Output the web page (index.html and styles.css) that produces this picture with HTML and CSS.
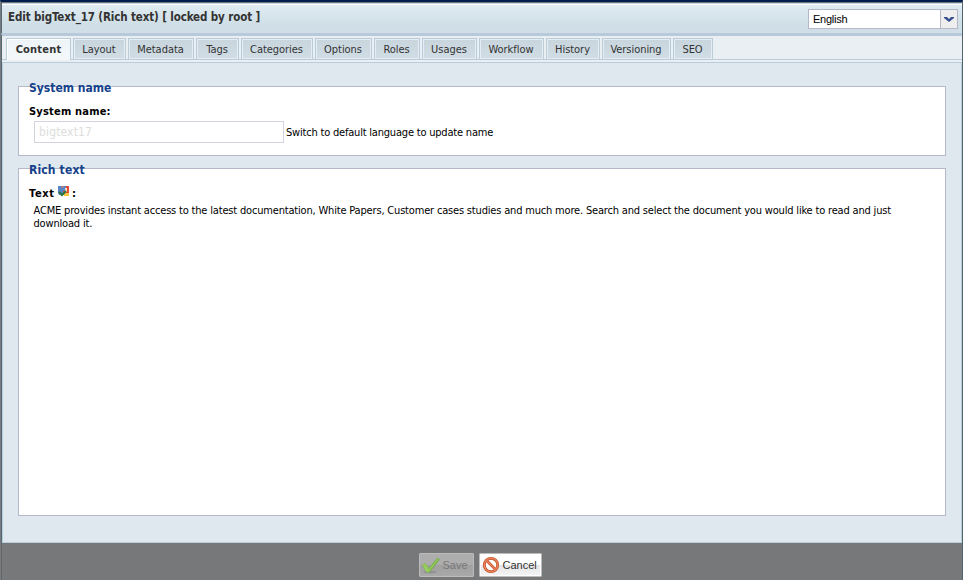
FILE: index.html
```html
<!DOCTYPE html>
<html lang="en">
<head>
<meta charset="utf-8">
<title>Edit bigText_17</title>
<link rel="stylesheet" href="styles.css">
</head>
<body>
<div class="window">
  <header class="header">
    <h1>Edit bigText_17 (Rich text) [ locked by root ]</h1>
    <div class="combo"><span>English</span><i><svg width="16" height="18" viewBox="0 0 16 18"><path d="M3 7h3l2 2 2-2h3v1l-5 4-5-4z" fill="#354f91"/></svg></i></div>
  </header>
  <nav class="tabs">
    <a class="tab active w64">Content</a><a class="tab w52">Layout</a><a class="tab w65">Metadata</a><a class="tab w42">Tags</a><a class="tab w71">Categories</a><a class="tab w56">Options</a><a class="tab w45">Roles</a><a class="tab w54">Usages</a><a class="tab w64">Workflow</a><a class="tab w53">History</a><a class="tab w68">Versioning</a><a class="tab w39">SEO</a>
  </nav>
  <main class="content">
    <section class="panel name-panel">
      <h2>System name</h2>
      <label class="name-label">System name:</label>
      <div class="field"><div class="input">bigtext17</div><span class="hint">Switch to default language to update name</span></div>
    </section>
    <section class="panel rich-panel">
      <h2 class="rich-title">Rich text</h2>
      <div class="text-label"><span>Text</span><svg width="12" height="12" viewBox="0 0 12 12"><path d="M0 1h8v9H1L0 8z" fill="#5784c5"/><path d="M3 1h3v2H3z" fill="#9b8290"/><path d="M8 1h3v5H8z" fill="#e94c35"/><path d="M5 6h6v2H5z" fill="#ed4b2d"/><path d="M7 3h2v4H7z" fill="#f5d5bd"/><path d="M6 8h5v3H6z" fill="#ffc43d"/><path d="M1 7l3 3 4-4" stroke="#2b7542" stroke-width="2" fill="none"/></svg><span>:</span></div>
      <div class="copy"><p class="line-one">ACME provides instant access to the latest documentation, White Papers, Customer cases studies and much more. Search and select the document you would like to read and just</p><p class="line-two">download it.</p></div>
    </section>
  </main>
  <footer class="footer">
    <div class="button save"><svg width="20" height="20" viewBox="0 0 20 20"><ellipse cx="8" cy="17" rx="7" ry="1.500" fill="#929292"/><path d="M0 10l3-2 4 5L15 3l3 1L8 17l-3 1z" fill="#78ae46"/><path d="M1 10l2-1 4 6 9-11-9 12-2 1z" fill="#96cd5d" stroke="#96cd5d"/></svg><span>Save</span></div>
    <div class="button cancel"><svg width="20" height="20" viewBox="0 0 20 20"><circle cx="9" cy="10" r="6.700" fill="#fff" stroke="#b84d26" stroke-width="2.800"/><path d="M4.500 5.500l9 9" stroke="#b84d26" stroke-width="2.600"/><circle cx="9" cy="10" r="6.700" fill="none" stroke="#ed8058" stroke-width="1.500"/><path d="M4.500 5.500l9 9" stroke="#ed8058" stroke-width="1.500"/></svg><span>Cancel</span></div>
  </footer>
</div>
</body>
</html>
```

FILE: styles.css
```css
* { box-sizing: border-box; }
body { margin: 0; width: 963px; height: 580px; overflow: hidden; background: #777879; font: 11px/13px "DejaVu Sans Condensed", "DejaVu Sans", sans-serif; font-stretch: condensed; color: #000; }
h1, h2, p { margin: 0; }
svg { display: block; flex: none; }
span, h1, p, .tab { white-space: nowrap; }
.window { height: 580px; border-top: 2px solid #001d50; display: flex; flex-direction: column; border-left: 1px solid #777b80; border-right: 1px solid #506570; }
.header { height: 31px; border-top: 1px solid #71777d; box-shadow: inset 0 1px #c5d2da, inset 0 2px #fff; background: linear-gradient(#e1ecf2, #d0dfe7 70%); display: flex; justify-content: space-between; border-left: 1px solid #536870; flex: none; }
h1 { font-size: 11.5px; line-height: 13px; padding: 8px 0 0 6px; color: #333; letter-spacing: -.12px; }
.combo { width: 150px; height: 20px; margin: 6px 4px 0; border: 1px solid #b5b8c8; background: #fff; display: flex; justify-content: space-between; font: 11px/19px "Liberation Sans", Arial, sans-serif; padding-left: 4px; letter-spacing: -.25px; }
.combo i { width: 17px; border-left: 1px solid #b5b8c8; background: #eee; }
.tabs { height: 30px; border-top: 3px solid #b8cada; background: linear-gradient(#e9eff3 23px, #b8cdd9 23px, #b8cdd9 24px, #e9eff3 24px, #e9eff3 26px, #b8cdd9 26px); border-left: 1px solid #536870; display: flex; gap: 2px; padding: 2px 0 0 4px; flex: none; }
.tab { height: 22px; border: 1px solid #b8cdd9; box-shadow: inset 0 0 0 1px #e5edf2; background: linear-gradient(#c8d5dd, #d0dde5); color: #333; line-height: 22px; text-align: center; flex: none; letter-spacing: -.04px; padding-right: 1px; }
.active { background: linear-gradient(#edf4f8, #f4f8fa); border-bottom: 0; font-weight: bold; box-shadow: inset 1px 1px #fff; letter-spacing: .2px; padding-right: 0; }
.w64 { width: 65px; } .w52 { width: 53px; } .w65 { width: 66px; } .w42 { width: 43px; } .w71 { width: 72px; } .w56 { width: 57px; } .w45 { width: 46px; } .w54 { width: 55px; } .w53 { width: 54px; } .w68 { width: 69px; } .w39 { width: 40px; }
.content { height: 480px; background: #e0e8ef; border: 1px solid #b7cedc; border-top: 0; margin-left: 1px; padding: 23px 15px 0; display: flex; flex-direction: column; gap: 12px; flex: none; box-shadow: -1px 0 #536870; }
.panel { border: 1px solid #b5b8c8; background: #fff; padding-left: 10px; flex: none; }
.name-panel { height: 70px; }
.rich-panel { height: 348px; }
h2 { font-size: 12px; line-height: 14px; width: max-content; color: #15428b; margin-top: -6px; }
.rich-title { letter-spacing: .15px; }
.name-label { display: block; font-weight: bold; line-height: 13px; margin-top: 10px; letter-spacing: .2px; }
.field { display: flex; gap: 2px; margin: 3px 0 0 5px; line-height: 24px; height: 24px; }
.input { width: 250px; height: 22px; border: 1px solid #d2d4df; padding-left: 4px; font: 12px/21px "DejaVu Sans Condensed", sans-serif; color: #ddd; letter-spacing: .15px; }
.hint { letter-spacing: -.2px; }
.text-label { display: flex; gap: 2px; font-weight: bold; margin-top: 9px; height: 14px; line-height: 15px; }
.text-label span:first-child { width: 27px; letter-spacing: .6px; }
.text-label svg { margin-top: -1px; }
.copy { padding: 4px 0 0 4.5px; line-height: 13px; letter-spacing: -.18px; }
.footer { flex: 1; background: #777879; display: flex; justify-content: center; gap: 5px; padding: 10px 4px 0 0; border-left: 1px solid #656667; }
.button { width: 55px; height: 24px; border: 1px solid #bbb; background: linear-gradient(#adadad 0 50%, #a0a0a0 52%, #a9a9a9); font: 11px/23px "Liberation Sans", Arial, sans-serif; color: #777; display: flex; gap: 1px; padding-left: 2px; border-radius: 1px; }
.button svg { margin-top: 1px; }
.cancel { width: 63px; border-color: #bbb; background: linear-gradient(#fff 0 50%, #e5e5e5 52%, #f5f5f5); color: #333; box-shadow: inset 0 0 0 1px #fff; }
```
